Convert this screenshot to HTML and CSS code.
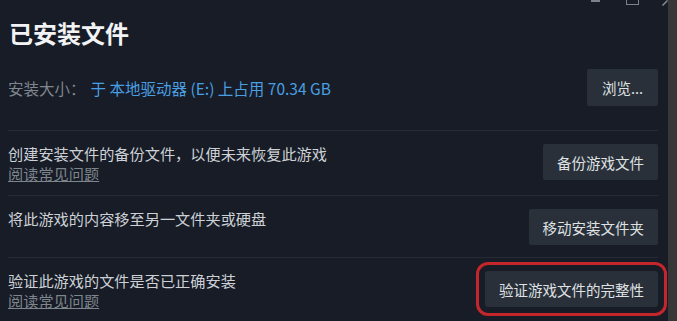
FILE: index.html
```html
<!DOCTYPE html>
<html>
<head>
  <meta charset="utf-8">
  <link rel="stylesheet" href="styles.css">
  <title>已安装文件</title>
</head>
<body>
  <div class="window">
    <div class="titlebar">
      <span class="win-min"></span>
      <span class="win-max"></span>
      <svg class="win-close" width="6" height="6" viewBox="0 0 6 6">
        <path d="M0.5 5.5 L5.5 0.5" stroke="#8a8f96" stroke-width="1.4" fill="none"/>
      </svg>
    </div>

    <div class="content">
      <h1>已安装文件</h1>

      <div class="info-row">
        <p class="size">
          <span class="size-label">安装大小：</span><span class="size-value">于 本地驱动器 (E:) 上占用 70.34 GB</span>
        </p>
        <button class="btn">浏览...</button>
      </div>

      <div class="row">
        <div class="desc">
          <p>创建安装文件的备份文件，以便未来恢复此游戏</p>
          <a class="faq" href="#">阅读常见问题</a>
        </div>
        <button class="btn">备份游戏文件</button>
      </div>

      <div class="row">
        <div class="desc">
          <p>将此游戏的内容移至另一文件夹或硬盘</p>
        </div>
        <button class="btn">移动安装文件夹</button>
      </div>

      <div class="row">
        <div class="desc">
          <p>验证此游戏的文件是否已正确安装</p>
          <a class="faq" href="#">阅读常见问题</a>
        </div>
        <button class="btn btn-marked">验证游戏文件的完整性</button>
      </div>
    </div>
  </div>

  <div class="scrollbar"></div>
</body>
</html>
```

FILE: styles.css
```css
/* Installed files panel */
body {
  margin: 0;
  display: flex;
  height: 321px;
  overflow: hidden;
  background-color: #171c26;
  font-family: "Noto Sans CJK SC", "Noto Sans", sans-serif;
}

.window {
  flex: 1;
}

.scrollbar {
  width: 9px;
  background-color: #37373a;
}

/* window buttons, mostly cut off at the top */
.titlebar {
  display: flex;
  justify-content: flex-end;
  align-items: flex-start;
  height: 6px;
}

.win-min {
  width: 9px;
  height: 2px;
  margin-right: 26px;
  background-color: #7d828a;
}

.win-max {
  width: 11px;
  height: 4px;
  margin-right: 23px;
  border: 1.5px solid #7d828a;
  border-top: none;
}

.content {
  padding: 0 10px 0 8px;
}

h1 {
  margin: 11px 0 0 1px;
  font-size: 24px;
  line-height: 32px;
  font-weight: bold;
  color: #f2f3f5;
}

p {
  margin: 0;
}

.info-row {
  display: flex;
  justify-content: space-between;
  align-items: center;
  margin-top: 20px;
  padding-bottom: 24px;
}

.size {
  font-size: 15.5px;
}

.size-label {
  color: #80868e;
  margin-right: 5px;
}

.size-value {
  color: #4a9fe2;
}

.row {
  display: flex;
  justify-content: space-between;
  align-items: flex-start;
  padding: 12px 0;
  border-top: 1px solid #262c37;
}

.desc {
  font-size: 15.2px;
  line-height: 20px;
  color: #cdd1d6;
}

.faq {
  display: block;
  color: #7e858d;
  text-decoration: underline;
}

.btn {
  height: 36px;
  margin-top: 1px;
  padding: 0 14px;
  font-family: inherit;
  font-size: 14.5px;
  color: #dfe1e3;
  background-color: #2a3039;
  border: none;
  border-radius: 2px;
}

.info-row .btn {
  height: 37px;
  margin-top: 0;
  padding: 0 15px;
}

/* highlighted with a red box in the screenshot */
.btn-marked {
  outline: 3px solid #c4262b;
  outline-offset: 6px;
  border-radius: 3px;
}
```
